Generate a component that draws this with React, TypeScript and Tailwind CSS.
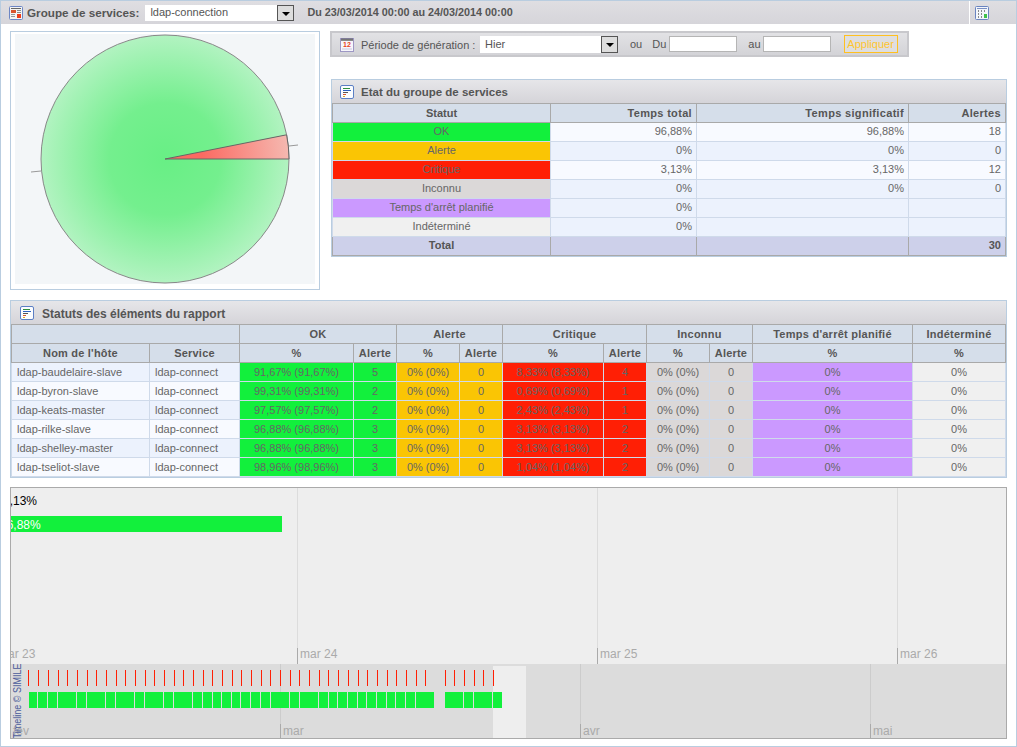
import React from "react";

const TICKS = [
	28, 38, 48, 58, 67, 77, 87, 96, 106, 116, 125, 135, 145, 154, 164, 174, 183, 193, 203, 212, 222, 232, 241, 251, 261,
	270, 280, 290, 299, 309, 319, 328, 338, 348, 358, 367, 377, 387, 396, 406, 416, 425, 445, 454, 464, 474, 483, 493,
];

const SEGMENTS: [number, number][] = [
	[29, 37], [38, 47], [48, 57], [58, 76], [77, 86], [87, 105], [106, 115], [116, 134], [135, 144], [145, 163],
	[164, 173], [174, 192], [193, 202], [203, 212], [213, 221], [222, 231], [232, 240], [241, 250], [251, 260], [261, 270],
	[271, 289], [290, 299], [300, 318], [319, 328], [329, 337], [338, 347], [348, 357], [358, 366], [367, 376], [377, 386],
	[387, 395], [396, 405], [406, 415], [416, 434], [445, 463], [464, 473], [474, 492], [493, 502],
];

const HOSTS = [
	["ldap-baudelaire-slave", "91,67% (91,67%)", "5", "8,33% (8,33%)", "4"],
	["ldap-byron-slave", "99,31% (99,31%)", "2", "0,69% (0,69%)", "1"],
	["ldap-keats-master", "97,57% (97,57%)", "2", "2,43% (2,43%)", "1"],
	["ldap-rilke-slave", "96,88% (96,88%)", "3", "3,13% (3,13%)", "2"],
	["ldap-shelley-master", "96,88% (96,88%)", "3", "3,13% (3,13%)", "2"],
	["ldap-tseliot-slave", "98,96% (98,96%)", "3", "1,04% (1,04%)", "2"],
];

const STATES = [
	{ label: "OK", color: "bg-[#12f03c]", row: "bg-[#f8faff]", total: "96,88%", real: "96,88%", alerts: "18" },
	{ label: "Alerte", color: "bg-[#fac504]", row: "bg-[#ecf2fd]", total: "0%", real: "0%", alerts: "0" },
	{ label: "Critique", color: "bg-[#ff1f05]", row: "bg-[#f8faff]", total: "3,13%", real: "3,13%", alerts: "12" },
	{ label: "Inconnu", color: "bg-[#dbd8d8]", row: "bg-[#ecf2fd]", total: "0%", real: "0%", alerts: "0" },
	{ label: "Temps d'arrêt planifié", color: "bg-[#cb99ff]", row: "bg-[#ecf2fd]", total: "0%", real: "", alerts: "" },
	{ label: "Indéterminé", color: "bg-[#f0f0f0]", row: "bg-[#ecf2fd]", total: "0%", real: "", alerts: "" },
];

function ReportIcon() {
	return (
		<svg width="14" height="14" viewBox="0 0 14 14" className="shrink-0">
			<rect x="0.5" y="0.5" width="13" height="13" rx="1.5" fill="#fbfdff" stroke="#5c7fc4" />
			<path d="M3 3.5h7" stroke="#2f8f3f" />
			<path d="M3 5.5h8" stroke="#2f62c0" />
			<path d="M3 7.5h5" stroke="#555" />
			<path d="M3 9.5h3" stroke="#d9542b" />
			<path d="M3 11.5h2" stroke="#d9a52b" />
		</svg>
	);
}

function GroupIcon() {
	return (
		<svg width="14" height="14" viewBox="0 0 14 14" className="shrink-0">
			<rect x="0.5" y="0.5" width="13" height="13" rx="1" fill="#f4f4f4" stroke="#6d86c4" />
			<path d="M2 2.5h10" stroke="#666" />
			<rect x="2" y="4" width="5" height="3" fill="#d9532c" />
			<path d="M8 4.5h4M8 6.5h4" stroke="#888" />
			<path d="M2 8.5h4M2 10.5h4" stroke="#999" />
			<rect x="8" y="8" width="4" height="4" fill="#ee3b1a" />
		</svg>
	);
}

function CalendarIcon() {
	return (
		<svg width="14" height="15" viewBox="0 0 14 15" className="shrink-0">
			<rect x="0.5" y="1.5" width="13" height="13" fill="#f7f6fb" stroke="#9d97c4" />
			<rect x="1" y="2" width="12" height="2" fill="#8a8a8a" />
			<path d="M2 1v2M4 1v2M6 1v2M8 1v2M10 1v2M12 1v2" stroke="#555" strokeWidth="0.8" />
			<text x="7" y="10" fontSize="7" fontWeight="700" textAnchor="middle" fill="#e8431c" fontFamily="'Liberation Sans', sans-serif">12</text>
			<path d="M2 12h10" stroke="#c9c6de" />
		</svg>
	);
}

function GridIcon() {
	return (
		<svg width="14" height="14" viewBox="0 0 14 14">
			<rect x="0.5" y="0.5" width="13" height="13" rx="1" fill="#f3f6fb" stroke="#6a84c0" />
			<path d="M2 2.5h10" stroke="#7a8fc4" />
			<path d="M3 5h1M6 5h1M9 5h1M3 8h1M6 8h1M3 11h1M6 11h1" stroke="#666" strokeWidth="1.4" />
			<rect x="9" y="8" width="3" height="4" fill="#3fc24a" />
		</svg>
	);
}

function SelectBox({ value, className }: { value: string; className: string }) {
	return (
		<div className={`flex items-center bg-white ${className}`}>
			<span className="flex-1 pl-[5px] text-[11px] text-[#555]">{value}</span>
			<span className="flex h-full w-[17px] items-center justify-center border border-[#555] bg-[#dddddd]">
				<span className="mt-[2px] h-0 w-0 border-x-[4px] border-t-[4px] border-x-transparent border-t-black" />
			</span>
		</div>
	);
}

function PiePanel() {
	return (
		<div className="h-[259px] w-[310px] shrink-0 border border-[#b9cde0] px-[4px] pb-[5px] pt-[2px]">
			<div className="h-full w-full bg-[#f3f6f8]">
				<svg width="300" height="250" viewBox="0 0 300 250">
					<defs>
						<radialGradient id="greenSlice" gradientUnits="userSpaceOnUse" cx="150" cy="125" r="124">
							<stop offset="0" stopColor="#68ef85" />
							<stop offset="0.45" stopColor="#74ef8e" />
							<stop offset="1" stopColor="#b2f3c1" />
						</radialGradient>
						<radialGradient id="redSlice" gradientUnits="userSpaceOnUse" cx="150" cy="125" r="124">
							<stop offset="0.3" stopColor="#fb6a62" />
							<stop offset="1" stopColor="#f5b8b0" />
						</radialGradient>
					</defs>
					<path d="M16 138L26 137" stroke="#999" />
					<path d="M274 112L283 111" stroke="#999" />
					<circle cx="150" cy="125" r="124" fill="url(#greenSlice)" stroke="#888" />
					<path d="M150 125L271.6 100.8A124 124 0 0 1 274 125Z" fill="url(#redSlice)" stroke="#666" />
				</svg>
			</div>
		</div>
	);
}

function FilterBar() {
	return (
		<div className="flex h-[26px] w-[579px] items-center border-2 border-[#c8c8cc] bg-gradient-to-b from-[#e2e2e5] to-[#d3d3d7] text-[11px] text-[#555]">
			<span className="ml-[8px]">
				<CalendarIcon />
			</span>
			<span className="ml-[7px] w-[119px] pt-[2px]">Période de génération :</span>
			<SelectBox value="Hier" className="h-[17px] w-[138px]" />
			<span className="ml-[12px]">ou</span>
			<span className="ml-[10px]">Du</span>
			<input className="ml-[3px] h-[16px] w-[68px] border border-[#b5b5b5] bg-white" />
			<span className="ml-[11px]">au</span>
			<input className="ml-[2px] h-[16px] w-[68px] border border-[#b5b5b5] bg-white" />
			<span className="ml-[13px] flex h-[18px] w-[54px] items-center justify-center border border-[#ffc020] bg-[#dedee0] text-[#ffc52e]">
				Appliquer
			</span>
		</div>
	);
}

const th = "border border-[#a9a9a9] bg-[#d5deea] px-[5px] py-0 text-[11px] font-bold text-[#555]";
const td = "border border-[#cfdaea] px-[5px] py-0 text-[11px] text-[#666]";

function PanelTitle({ title, className, textClass }: { title: string; className: string; textClass: string }) {
	return (
		<div className={`flex h-[23px] items-center bg-gradient-to-b from-[#e6e6e9] to-[#d5d4d9] font-bold text-[#555] ${className}`}>
			<ReportIcon />
			<span className={textClass}>{title}</span>
		</div>
	);
}

function StatePanel() {
	const cell = `${td} !pb-[2px] leading-[14px]`;
	const right = `${cell} !pr-[4px] text-right`;
	const head = `${th} !pr-[4px] tracking-[0.33px] text-right`;
	return (
		<div className="ml-[1px] mt-[22px] w-[676px] border border-[#b9cde0]">
			<PanelTitle title="Etat du groupe de services" className="gap-[7px] pl-[8px] text-[11.5px]" textClass="mt-[3px]" />
			<table className="w-full table-fixed border-collapse">
				<colgroup>
					<col className="w-[218px]" />
					<col className="w-[146px]" />
					<col className="w-[212px]" />
					<col />
				</colgroup>
				<thead>
					<tr className="h-[19px]">
						<th className={`${th} text-center`}>Statut</th>
						<th className={head}>Temps total</th>
						<th className={head}>Temps significatif</th>
						<th className={head}>Alertes</th>
					</tr>
				</thead>
				<tbody>
					{STATES.map((s) => (
						<tr key={s.label} className={`h-[19px] ${s.row}`}>
							<td className={`${cell} ${s.color} text-center`}>{s.label}</td>
							<td className={right}>{s.total}</td>
							<td className={right}>{s.real}</td>
							<td className={right}>{s.alerts}</td>
						</tr>
					))}
					<tr className="h-[19px] bg-[#cdd0ea] text-[11px] font-bold leading-[14px] text-[#555]">
						<td className="border border-[#a9a9a9] pb-[2px] text-center">Total</td>
						<td className="border border-[#a9a9a9]" />
						<td className="border border-[#a9a9a9]" />
						<td className="border border-[#a9a9a9] pb-[2px] pr-[4px] text-right">30</td>
					</tr>
				</tbody>
			</table>
		</div>
	);
}

function ReportPanel() {
	const group = `${th} tracking-[0.25px]`;
	const alert = `${th} !px-0 tracking-[0.2px]`;
	return (
		<div className="mt-[10px] w-[997px] border border-[#b9cde0]">
			<PanelTitle title="Statuts des éléments du rapport" className="gap-[8px] pl-[9px] text-[12px]" textClass="mt-[2px]" />
			<table className="w-full table-fixed border-collapse">
				<colgroup>
					<col className="w-[138px]" />
					<col className="w-[90px]" />
					<col className="w-[114px]" />
					<col className="w-[43px]" />
					<col className="w-[63px]" />
					<col className="w-[43px]" />
					<col className="w-[101px]" />
					<col className="w-[43px]" />
					<col className="w-[63px]" />
					<col className="w-[43px]" />
					<col className="w-[160px]" />
					<col />
				</colgroup>
				<thead>
					<tr className="h-[19px]">
						<th colSpan={2} className={th} />
						<th colSpan={2} className={group}>OK</th>
						<th colSpan={2} className={group}>Alerte</th>
						<th colSpan={2} className={group}>Critique</th>
						<th colSpan={2} className={group}>Inconnu</th>
						<th className={group}>Temps d'arrêt planifié</th>
						<th className={`${group} !px-0`}>Indéterminé</th>
					</tr>
					<tr className="h-[19px]">
						<th className={`${th} tracking-[0.2px]`}>Nom de l'hôte</th>
						<th className={`${th} tracking-[0.2px]`}>Service</th>
						<th className={th}>%</th>
						<th className={alert}>Alerte</th>
						<th className={th}>%</th>
						<th className={alert}>Alerte</th>
						<th className={th}>%</th>
						<th className={alert}>Alerte</th>
						<th className={th}>%</th>
						<th className={alert}>Alerte</th>
						<th className={th}>%</th>
						<th className={th}>%</th>
					</tr>
				</thead>
				<tbody>
					{HOSTS.map((h, i) => (
						<tr key={h[0]} className={`h-[19px] text-center ${i % 2 === 0 ? "bg-[#ecf2fd]" : "bg-[#f8faff]"}`}>
							<td className={`${td} text-left`}>{h[0]}</td>
							<td className={`${td} text-left`}>ldap-connect</td>
							<td className={`${td} bg-[#12f03c]`}>{h[1]}</td>
							<td className={`${td} bg-[#12f03c]`}>{h[2]}</td>
							<td className={`${td} bg-[#fac504]`}>0% (0%)</td>
							<td className={`${td} bg-[#fac504]`}>0</td>
							<td className={`${td} bg-[#ff1f05]`}>{h[3]}</td>
							<td className={`${td} bg-[#ff1f05]`}>{h[4]}</td>
							<td className={`${td} bg-[#dbd8d8]`}>0% (0%)</td>
							<td className={`${td} bg-[#dbd8d8]`}>0</td>
							<td className={`${td} bg-[#cb99ff]`}>0%</td>
							<td className={`${td} bg-[#f0f0f0]`}>0%</td>
						</tr>
					))}
				</tbody>
			</table>
		</div>
	);
}

function Timeline() {
	return (
		<div className="mt-[9px] h-[252px] w-[997px] overflow-hidden border border-[#aaaaaa] bg-[#eeeeee]">
			{/* upper band */}
			<div className="relative h-[176px] overflow-hidden text-[12px]">
				{[286, 586, 886].map((x) => (
					<React.Fragment key={x}>
						<div className="absolute top-0 h-[160px] w-px bg-[#dcdcdc]" style={{ left: x }} />
						<div className="absolute top-[160px] h-[16px] w-px bg-[#aaaaaa]" style={{ left: x }} />
					</React.Fragment>
				))}
				<span className="absolute left-[-13px] top-[157px] text-[#aaaaaa]">mar 23</span>
				<span className="absolute left-[289px] top-[157px] text-[#aaaaaa]">mar 24</span>
				<span className="absolute left-[589px] top-[157px] text-[#aaaaaa]">mar 25</span>
				<span className="absolute left-[889px] top-[157px] text-[#aaaaaa]">mar 26</span>
				<span className="absolute left-[-8px] top-[4px] text-black">3,13%</span>
				<div className="absolute left-0 top-[28px] h-[16px] w-[271px] bg-[#12f03c]" />
				<span className="absolute left-[-11px] top-[28px] text-white">96,88%</span>
			</div>
			{/* overview band */}
			<div className="relative h-[74px] overflow-hidden bg-[#dcdcdc] text-[12px]">
				<div className="absolute left-[482px] top-[2px] h-[72px] w-[33px] bg-[#eeeeee]" />
				{[269, 569, 859].map((x) => (
					<React.Fragment key={x}>
						<div className="absolute top-0 h-[60px] w-px bg-[#cccccc]" style={{ left: x }} />
						<div className="absolute top-[60px] h-[14px] w-px bg-[#aaaaaa]" style={{ left: x }} />
					</React.Fragment>
				))}
				<span className="absolute left-[2px] top-[58px] text-[#aaaaaa]">fév</span>
				<span className="absolute left-[272px] top-[58px] text-[#aaaaaa]">mar</span>
				<span className="absolute left-[572px] top-[58px] text-[#aaaaaa]">avr</span>
				<span className="absolute left-[862px] top-[58px] text-[#aaaaaa]">mai</span>
				{TICKS.map((x) => (
					<div key={x} className="absolute top-[6px] h-[16px] w-px bg-[#ff1f05]" style={{ left: x - 11 }} />
				))}
				{SEGMENTS.map(([a, b]) => (
					<div key={a} className="absolute top-[28px] h-[16px] bg-[#12f03c]" style={{ left: a - 11, width: b - a }} />
				))}
				<span className="absolute left-[-40px] top-[31px] h-[12px] w-[92px] -rotate-90 scale-x-[0.82] whitespace-nowrap text-center text-[11px] leading-[12px] text-[#4a5a9a]">
					Timeline © SIMILE
				</span>
			</div>
		</div>
	);
}

export default function App() {
	return (
		<div className="h-[747px] w-[1017px] overflow-hidden border border-[#b9cde0] bg-white font-['Liberation_Sans',Arial,sans-serif]">
			<div className="flex h-[23px] items-center bg-gradient-to-b from-[#dfdee2] to-[#d6d5da] pl-[8px]">
				<GroupIcon />
				<span className="ml-[4px] text-[11.7px] font-bold text-[#555]">Groupe de services:</span>
				<SelectBox value="ldap-connection" className="ml-[6px] h-[16px] w-[149px]" />
				<span className="ml-[13px] text-[10.8px] font-bold text-[#555]">Du 23/03/2014 00:00 au 24/03/2014 00:00</span>
				<div className="ml-auto flex h-full w-[47px] border-l border-white pl-[5px] pt-[5px]">
					<GridIcon />
				</div>
			</div>
			<div className="pl-[9px]">
				<div className="mt-[7px] flex h-[259px] gap-[10px]">
					<PiePanel />
					<div>
						<FilterBar />
						<StatePanel />
					</div>
				</div>
				<ReportPanel />
				<Timeline />
			</div>
		</div>
	);
}
